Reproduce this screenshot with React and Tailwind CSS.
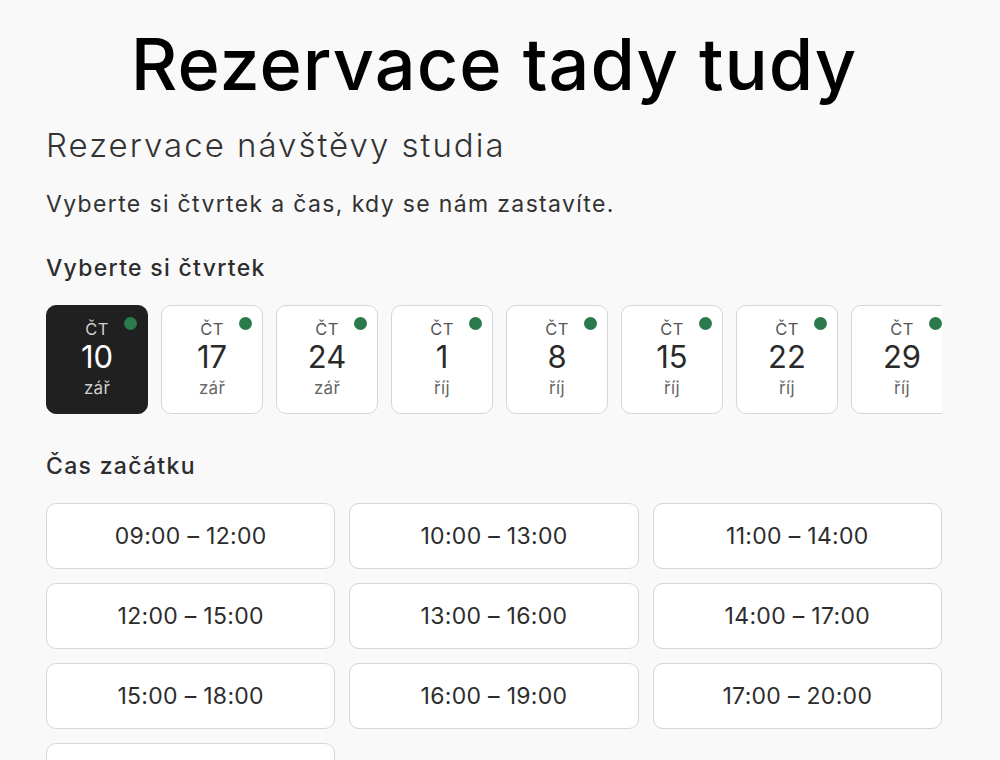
const days = [
  { d: '10', m: 'zář' },
  { d: '17', m: 'zář' },
  { d: '24', m: 'zář' },
  { d: '1', m: 'říj' },
  { d: '8', m: 'říj' },
  { d: '15', m: 'říj' },
  { d: '22', m: 'říj' },
  { d: '29', m: 'říj' },
];

const slots = [
  '09:00 – 12:00', '10:00 – 13:00', '11:00 – 14:00',
  '12:00 – 15:00', '13:00 – 16:00', '14:00 – 17:00',
  '15:00 – 18:00', '16:00 – 19:00', '17:00 – 20:00',
  '18:00 – 21:00',
];

function DayCard({ day, selected }) {
  return (
    <button
      className={`relative shrink-0 w-[102px] h-[109px] rounded-[10px] border flex flex-col items-center pt-[13px]
        ${selected ? 'bg-[#202020] border-[#202020]' : 'bg-white border-[#d6d6d6]'}`}
    >
      <span className="absolute top-[11px] right-[10px] w-[13px] h-[13px] rounded-full bg-[#2b7a4b]" />
      <span className={`text-[16.5px] leading-[20px] tracking-[0.5px] ${selected ? 'text-[#cfcfcf]' : 'text-[#555]'}`}>ČT</span>
      <span className={`text-[31px] leading-[36px] ${selected ? 'text-white' : 'text-[#2a2a2a]'}`}>{day.d}</span>
      <span className={`mt-[2px] text-[17px] leading-[22px] tracking-[0.3px] ${selected ? 'text-[#cfcfcf]' : 'text-[#666]'}`}>{day.m}</span>
    </button>
  );
}

export default function App() {
  return (
    <div className="min-h-screen bg-[#f9f9f9] font-['Inter',sans-serif] text-[#2d2d2d]">
      <div className="px-[46px] pt-[24px] w-[988px]">
        <h1 className="text-center text-[72px] leading-[80px] font-medium text-black tracking-[1px]">
          Rezervace tady tudy
        </h1>
        <h2 className="mt-[21px] text-[33px] leading-[40px] font-light text-[#333] tracking-[2px]">Rezervace návštěvy studia</h2>
        <p className="mt-[24px] text-[23px] leading-[30px] text-[#333] tracking-[1.35px]">Vyberte si čtvrtek a čas, kdy se nám zastavíte.</p>

        <h3 className="mt-[34px] text-[23px] leading-[30px] font-medium text-[#2d2d2d] tracking-[1.3px]">Vyberte si čtvrtek</h3>
        <div className="mt-[22px] w-[896px] overflow-hidden flex gap-[13px]">
          {days.map((day, i) => (
            <DayCard key={i} day={day} selected={i === 0} />
          ))}
        </div>

        <h3 className="mt-[37px] text-[23px] leading-[30px] font-medium text-[#2d2d2d] tracking-[1.3px]">Čas začátku</h3>
        <div className="mt-[22px] w-[896px] grid grid-cols-3 gap-[14px]">
          {slots.map((s) => (
            <button key={s} className="h-[66px] rounded-[10px] border border-[#d6d6d6] bg-white text-[23px] tracking-[0.3px] text-[#2d2d2d]">
              {s}
            </button>
          ))}
        </div>
      </div>
    </div>
  );
}
